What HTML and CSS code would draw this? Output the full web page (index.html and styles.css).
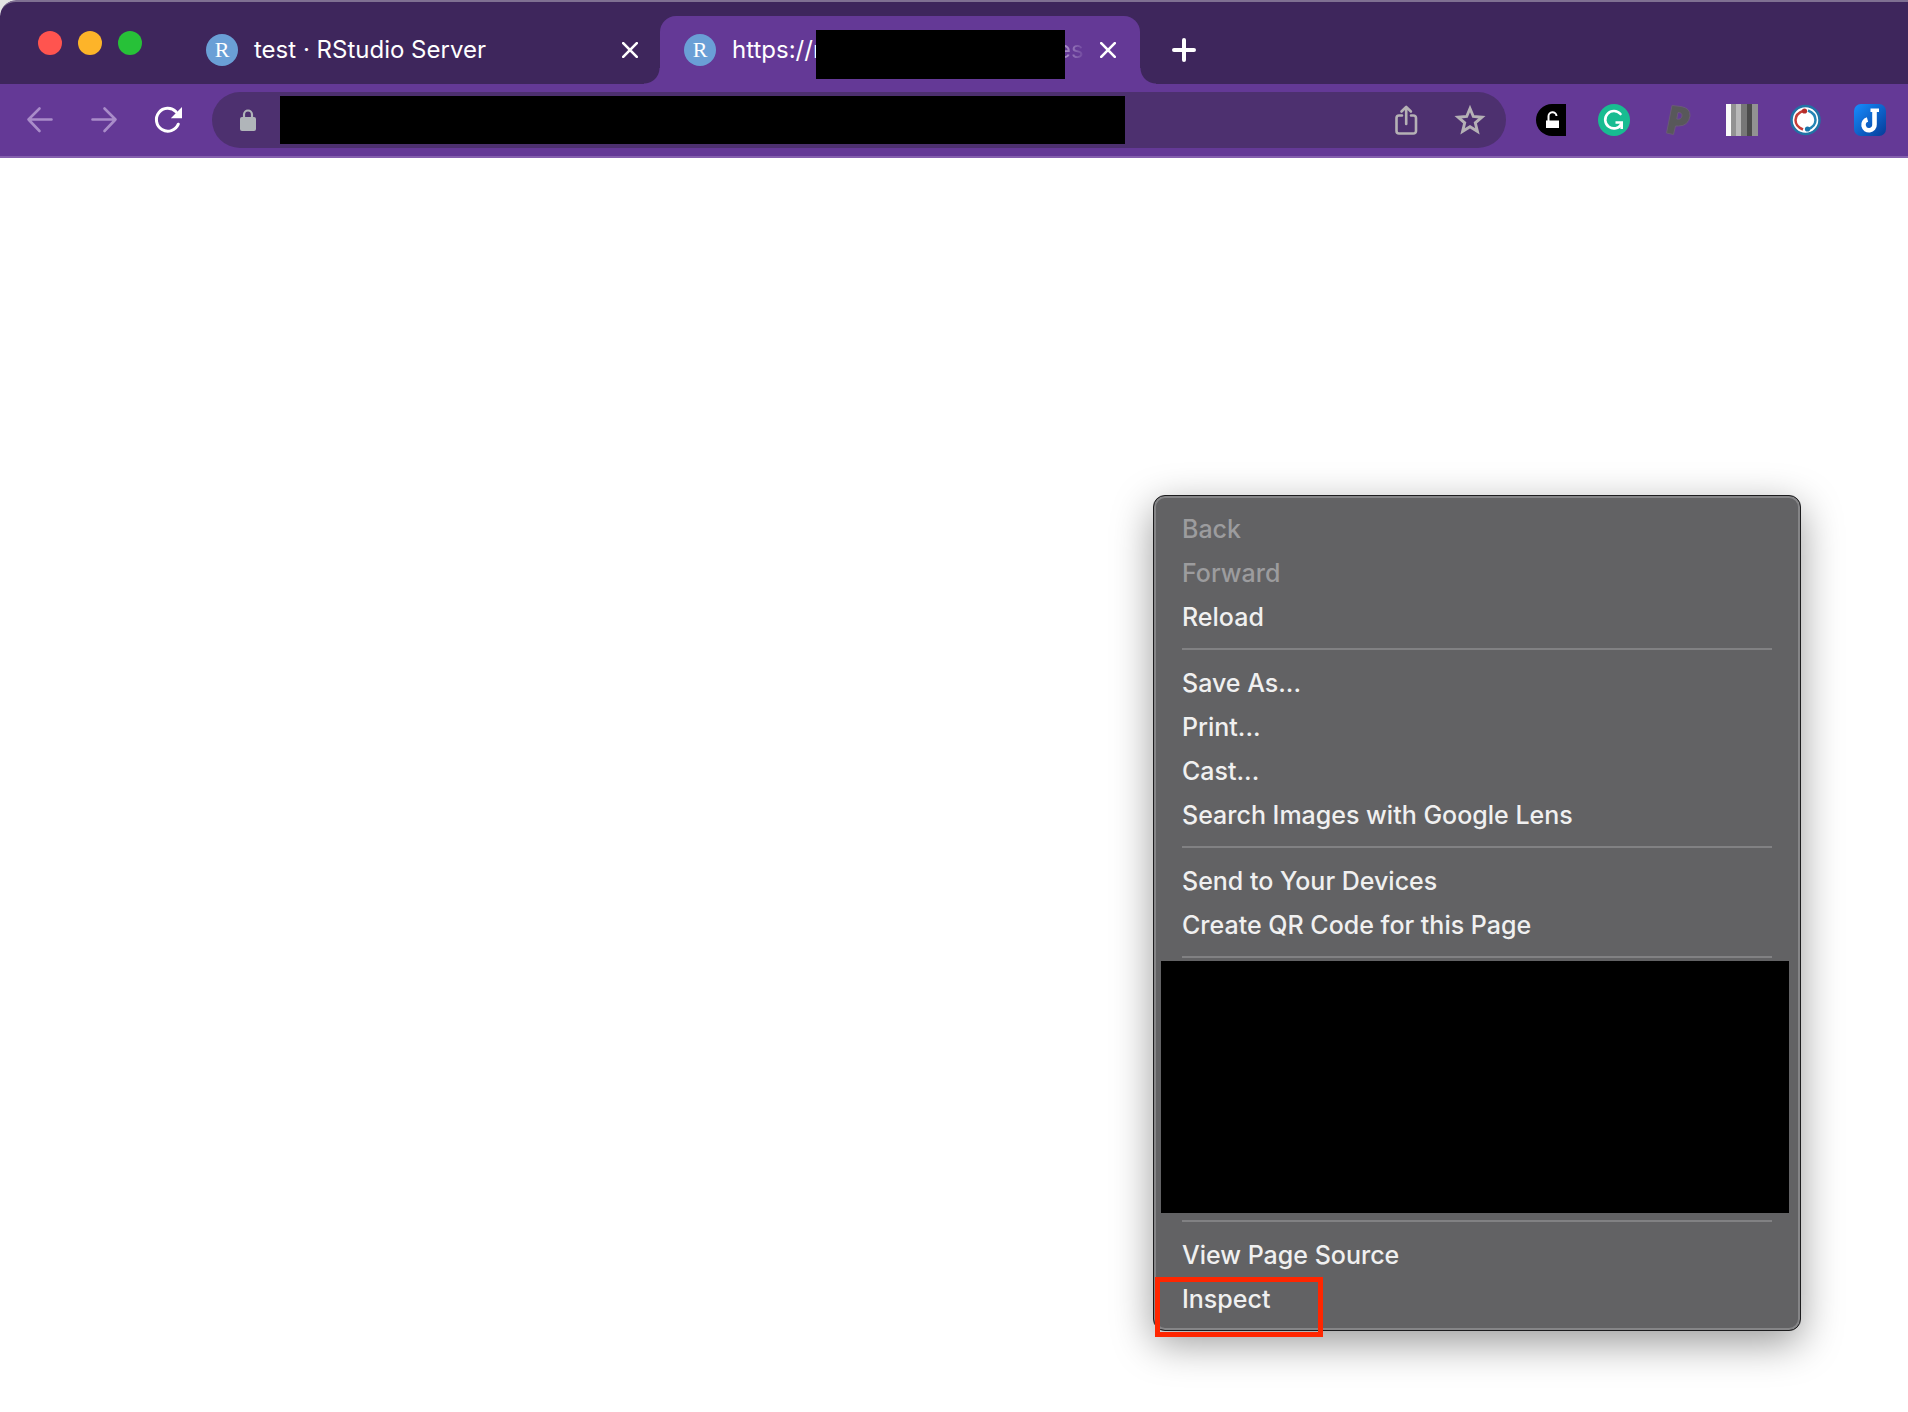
FILE: index.html
```
<!DOCTYPE html>
<html lang="en">
<head>
<meta charset="utf-8">
<title>test · RStudio Server</title>
<link rel="stylesheet" href="styles.css">
</head>
<body>
<div class="window">
  <header class="tab-strip">
    <div class="lights">
      <button class="light light-close" aria-label="Close window"></button>
      <button class="light light-min" aria-label="Minimize window"></button>
      <button class="light light-max" aria-label="Zoom window"></button>
    </div>
    <div class="tab">
      <span class="favicon">R</span>
      <span class="tab-title">test · RStudio Server</span>
      <button class="tab-close" aria-label="Close tab"><svg width="16" height="16" viewBox="0 0 16 16"><path d="M1.2 1.2l13.6 13.6M14.8 1.2L1.2 14.8" stroke="#fff" stroke-width="2.6" stroke-linecap="round"/></svg></button>
    </div>
    <div class="tab tab-active">
      <span class="favicon">R</span>
      <span class="tab-title tab-url"><span class="url-start">https://r</span><span class="tab-mask"></span><span class="url-end">es</span></span>
      <button class="tab-close" aria-label="Close tab"><svg width="16" height="16" viewBox="0 0 16 16"><path d="M1.2 1.2l13.6 13.6M14.8 1.2L1.2 14.8" stroke="#fff" stroke-width="2.6" stroke-linecap="round"/></svg></button>
    </div>
    <button class="new-tab" aria-label="New tab"><svg width="24" height="24" viewBox="0 0 24 24"><path d="M12 2v20M2 12h20" stroke="#fff" stroke-width="4" stroke-linecap="round"/></svg></button>
  </header>

  <nav class="toolbar">
    <button class="tool" aria-label="Back"><svg width="32" height="32" viewBox="0 0 32 32" fill="none" stroke="#a98cc9" stroke-width="2.6" stroke-linecap="round" stroke-linejoin="round"><path d="M27.5 15.500H4.500M15.500 4.500l-11 11 11 11.500"/></svg></button>
    <button class="tool" aria-label="Forward"><svg width="32" height="32" viewBox="0 0 32 32" fill="none" stroke="#a98cc9" stroke-width="2.6" stroke-linecap="round" stroke-linejoin="round"><path d="M4.500 15.500h23M16.500 4.500l11 11-11 11.500"/></svg></button>
    <button class="tool" aria-label="Reload"><svg width="32" height="32" viewBox="0 0 32 32"><path d="M26.300 20.200A11.400 11.400 0 1 1 24 7.800" fill="none" stroke="#fff" stroke-width="3" stroke-linecap="round"/><path d="M30 3v11.200H18.800z" fill="#fff"/></svg></button>
    <div class="omnibox">
      <button class="tool" aria-label="Site information"><svg width="32" height="32" viewBox="0 0 32 32"><rect x="8" y="13" width="16" height="14" rx="2" fill="#b0b5b9"/><path d="M12 13v-2.500a4 4 0 0 1 8 0V13" fill="none" stroke="#b0b5b9" stroke-width="2.2"/></svg></button>
      <input class="address" type="text" aria-label="Address">
      <span class="omnibox-actions">
        <button class="tool" aria-label="Share"><svg width="32" height="32" viewBox="0 0 32 32" fill="none" stroke="#b5b1b5" stroke-width="2.6" stroke-linecap="round" stroke-linejoin="round"><path d="M12 11.500H9a2.500 2.500 0 0 0-2.500 2.500v13a2.500 2.500 0 0 0 2.500 2.500h14.500A2.500 2.500 0 0 0 26 27V14a2.500 2.500 0 0 0-2.500-2.500H21M16.200 20V3.500M11.500 7.500l4.700-4.700 4.700 4.700"/></svg></button>
        <button class="tool" aria-label="Bookmark this tab"><svg width="32" height="32" viewBox="0 0 32 32"><path d="M16 4.500l3.300 8 8.600.7-6.600 5.600 2.100 8.500-7.400-4.600-7.400 4.600 2.100-8.500-6.600-5.600 8.600-.7z" fill="none" stroke="#b5b1b5" stroke-width="2.9"/></svg></button>
      </span>
    </div>
    <div class="extensions">
      <button class="tool" aria-label="Unlock extension"><svg width="32" height="32" viewBox="0 0 32 32"><path d="M32 0H18a16 16 0 0 0 0 32h14z" fill="#000"/><path d="M12 16.500h13V24H12z" fill="#fff"/><path d="M14.500 17v-4.500a4 4 0 0 1 8-.5" fill="none" stroke="#fff" stroke-width="2"/></svg></button>
      <button class="tool" aria-label="Grammar extension"><svg width="32" height="32" viewBox="0 0 32 32"><circle cx="16" cy="16" r="16" fill="#18bc91"/><path d="M22.500 10A8.700 8.700 0 1 0 23.500 20" fill="none" stroke="#fff" stroke-width="2.600" stroke-linecap="round"/><path d="M17.500 18.500h6.200v6.500" fill="none" stroke="#fff" stroke-width="2.600"/></svg></button>
      <button class="tool" aria-label="P extension"><svg width="32" height="32" viewBox="0 0 32 32"><path fill-rule="evenodd" d="M10 1.500L19 2.500q9.500 1.500 9 9.500-1.500 10-11.500 10h-3L11.500 30.500l-7-1.500zM16 8.500L14.800 15q4.700 1 5.200-3.200.2-3.300-4-3.300z" fill="#58585a" stroke="#6a5a78" stroke-width="1"/></svg></button>
      <button class="tool" aria-label="Bars extension"><svg width="32" height="32" viewBox="0 0 32 32"><path fill="#fafafa" d="M0 0h5v32H0z"/><path fill="#929292" d="M5 0h5v32H5z"/><path fill="#b9b9b9" d="M10 0h5v32h-5z"/><path fill="#777" d="M15 0h6v32h-6z"/><path fill="#4b4b4b" d="M21 0h5v32h-5z"/><path fill="#929292" d="M26 0h6v32h-6z"/></svg></button>
      <button class="tool" aria-label="Sync extension"><svg width="32" height="32" viewBox="0 0 32 32"><circle cx="15.500" cy="16" r="14" fill="#fff" stroke="#2173a6" stroke-width="2.500"/><path d="M13 25.500Q5.500 22.500 5.500 16T14 6.500" fill="none" stroke="#c43c38" stroke-width="2.500"/><circle cx="14.500" cy="7" r="2.600" fill="#b52d2a"/><path d="M18 6.500q7.500 3 7.500 9.500t-8 9.500" fill="none" stroke="#2385b5" stroke-width="2.500"/><circle cx="17.500" cy="25" r="2.600" fill="#1675aa"/></svg></button>
      <button class="tool" aria-label="J extension"><svg width="32" height="32" viewBox="0 0 32 32"><defs><linearGradient id="blue" x1="0" y1="0" x2="1" y2="1"><stop offset="0" stop-color="#168dff"/><stop offset="1" stop-color="#063b98"/></linearGradient></defs><rect width="32" height="32" rx="7" fill="url(#blue)"/><path d="M16.500 4.500H25V8h-8.500z" fill="#fff"/><path d="M20.500 6v14.500a5.500 5.500 0 1 1-7-5" fill="none" stroke="#fff" stroke-width="4.600"/></svg></button>
    </div>
  </nav>

  <main class="page"></main>
</div>

<div class="menu" role="menu">
  <button class="item" role="menuitem" disabled>Back</button>
  <button class="item" role="menuitem" disabled>Forward</button>
  <button class="item" role="menuitem">Reload</button>
  <hr class="rule">
  <button class="item" role="menuitem">Save As...</button>
  <button class="item" role="menuitem">Print...</button>
  <button class="item" role="menuitem">Cast...</button>
  <button class="item" role="menuitem">Search Images with Google Lens</button>
  <hr class="rule">
  <button class="item" role="menuitem">Send to Your Devices</button>
  <button class="item" role="menuitem">Create QR Code for this Page</button>
  <hr class="rule">
  <div class="menu-mask"></div>
  <hr class="rule">
  <button class="item" role="menuitem">View Page Source</button>
  <button class="item" role="menuitem">Inspect</button>
  <span class="highlight"></span>
</div>
</body>
</html>
```
FILE: styles.css
```
* { box-sizing: border-box; }

body {
  margin: 0;
  background: #e4e4e4;
  font-family: Inter, "Liberation Sans", sans-serif;
}

button {
  padding: 0;
  border: 0;
  background: none;
  font: inherit;
}

svg { display: block; }

.window {
  display: flex;
  flex-direction: column;
  min-height: 100vh;
  overflow: hidden;
  background: #fff;
  border-top-left-radius: 16px;
}

/* Tab strip */
.tab-strip {
  display: flex;
  align-items: flex-end;
  height: 84px;
  border-top: 2px solid #7f7092;
  border-top-left-radius: 16px;
  background: #3e265c;
}

.lights {
  display: flex;
  flex: none;
  gap: 16px;
  width: 182px;
  padding: 0 0 29px 38px;
}

.light {
  width: 24px;
  height: 24px;
  border-radius: 50%;
}

.light-close { background: #ff544f; }
.light-min { background: #fdb429; }
.light-max { background: #27c138; }

.tab {
  display: flex;
  flex: 0 1 478px;
  align-items: center;
  gap: 16px;
  min-width: 0;
  height: 68px;
  padding: 0 22px 0 24px;
  color: #fff;
}

.tab-active {
  position: relative;
  flex-basis: 480px;
  padding-right: 24px;
  border-radius: 16px 16px 0 0;
  background: #643996;
}

.tab-active::before,
.tab-active::after {
  content: "";
  position: absolute;
  bottom: 0;
  width: 16px;
  height: 16px;
}

.tab-active::before {
  right: 100%;
  background: radial-gradient(circle at 0 0, #3e265c 15px, #643996 16px);
}

.tab-active::after {
  left: 100%;
  background: radial-gradient(circle at 100% 0, #3e265c 15px, #643996 16px);
}

.favicon {
  flex: none;
  width: 32px;
  height: 32px;
  border-radius: 50%;
  background: #6a9fd6;
  font: 22px/31px "Liberation Serif", serif;
  text-align: center;
}

.tab-title {
  flex: 1;
  min-width: 0;
  font-size: 24px;
  line-height: 32px;
  white-space: nowrap;
}

.tab-url {
  display: flex;
  align-items: center;
  height: 68px;
}

.url-start {
  flex: none;
  width: 84px;
}

.tab-mask {
  position: relative;
  flex: none;
  width: 249px;
  height: 49px;
  margin-top: 9px;
  background: #000;
}

.url-end {
  flex: none;
  margin-left: -8px;
  background: linear-gradient(90deg, #c4b0db, #643996 30px);
  background-clip: text;
  color: transparent;
}

.tab-close {
  display: grid;
  flex: none;
  place-items: center;
  width: 16px;
  height: 32px;
}

.new-tab {
  display: grid;
  place-items: center;
  width: 88px;
  height: 68px;
}

/* Toolbar */
.toolbar {
  display: flex;
  align-items: center;
  height: 74px;
  padding: 0 6px 0 8px;
  border-bottom: 2px solid #8560ae;
  background: #643996;
}

.tool {
  display: grid;
  flex: none;
  place-items: center;
  width: 64px;
  height: 56px;
}

.omnibox {
  display: flex;
  flex: 1;
  align-items: center;
  min-width: 0;
  height: 56px;
  margin: 0 12px;
  padding: 0 4px;
  border-radius: 28px;
  background: #4d306f;
}

.address {
  flex: 0 1 845px;
  min-width: 0;
  height: 48px;
  padding: 0 8px;
  border: 0;
  border-radius: 0;
  background: #000;
  color: #fff;
  font: inherit;
}

.omnibox-actions {
  display: flex;
  margin-left: auto;
}

.extensions { display: flex; }

.page { flex: 1; }

/* Context menu */
.menu {
  position: absolute;
  top: 495px;
  left: 1153px;
  width: 648px;
  padding: 11px 0 9px;
  border: 1px solid #1c1c1e;
  border-radius: 12px;
  background: #626264;
  box-shadow: inset 0 0 0 2px #858587, 0 12px 40px rgba(0, 0, 0, 0.4);
}

.item {
  display: block;
  width: 100%;
  height: 44px;
  padding: 0 28px;
  color: #f0f0f0;
  font-size: 25px;
  font-weight: 500;
  line-height: 44px;
  text-align: left;
}

.item:disabled { color: #9c9c9e; }

.rule {
  height: 2px;
  margin: 9px 28px 11px;
  border: 0;
  background: #818183;
}

.menu-mask {
  height: 252px;
  margin: -8px 11px -2px 7px;
  background: #000;
}

.highlight {
  position: absolute;
  bottom: -7px;
  left: 1px;
  width: 168px;
  height: 60px;
  border: 5px solid #ff2600;
}
```
